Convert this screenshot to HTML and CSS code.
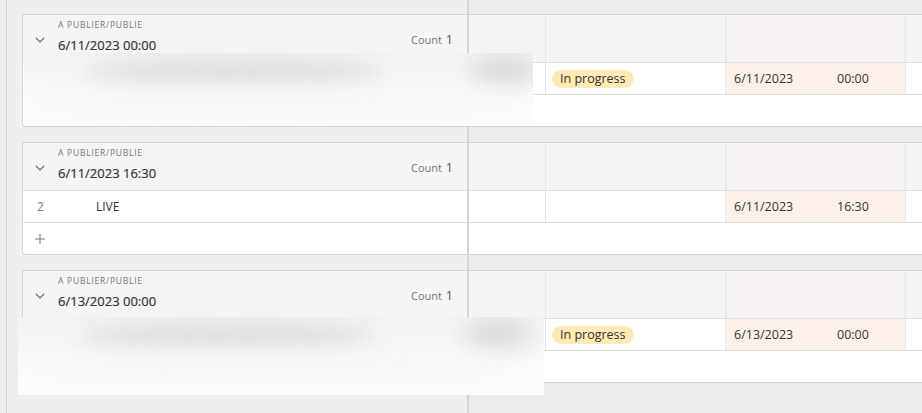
FILE: index.html
```html
<!DOCTYPE html>
<html>
<head>
<meta charset="utf-8">
<link rel="stylesheet" href="styles.css">
</head>
<body>
<div class="app">
  <div class="frozen">
    <section class="group">
      <div class="ghead">
        <svg class="chev" width="10" height="6" viewBox="0 0 10 6"><polyline points="1,1 5,5 9,1" fill="none" stroke="#666" stroke-width="1.1"/></svg>
        <div class="gtitle"><div class="glabel">A PUBLIER/PUBLIE</div><div class="gvalue">6/11/2023 00:00</div></div>
        <div class="count">Count <span class="num">1</span></div>
      </div>
      <div class="row"></div>
      <div class="row"></div>
    </section>
    <section class="group">
      <div class="ghead">
        <svg class="chev" width="10" height="6" viewBox="0 0 10 6"><polyline points="1,1 5,5 9,1" fill="none" stroke="#666" stroke-width="1.1"/></svg>
        <div class="gtitle"><div class="glabel">A PUBLIER/PUBLIE</div><div class="gvalue">6/11/2023 16:30</div></div>
        <div class="count">Count <span class="num">1</span></div>
      </div>
      <div class="row"><span class="rownum">2</span><span class="primary">LIVE</span></div>
      <div class="row add"><svg width="10" height="10" viewBox="0 0 10 10"><path d="M5 0v10M0 5h10" stroke="#777" stroke-width="1"/></svg></div>
    </section>
    <section class="group">
      <div class="ghead">
        <svg class="chev" width="10" height="6" viewBox="0 0 10 6"><polyline points="1,1 5,5 9,1" fill="none" stroke="#666" stroke-width="1.1"/></svg>
        <div class="gtitle"><div class="glabel">A PUBLIER/PUBLIE</div><div class="gvalue">6/13/2023 00:00</div></div>
        <div class="count">Count <span class="num">1</span></div>
      </div>
      <div class="row"></div>
      <div class="row"></div>
    </section>
  </div>
  <div class="divider"></div>
  <div class="scroll">
    <section class="group">
      <div class="ghead cols"><div class="c c1"></div><div class="c c2"></div><div class="c c3 pink"></div><div class="c c4"></div></div>
      <div class="row cols"><div class="c c1"></div><div class="c c2"><span class="pill">In progress</span></div><div class="c c3 pink"><span class="date">6/11/2023</span><span>00:00</span></div><div class="c c4"></div></div>
      <div class="row"></div>
    </section>
    <section class="group">
      <div class="ghead cols"><div class="c c1"></div><div class="c c2"></div><div class="c c3 pink"></div><div class="c c4"></div></div>
      <div class="row cols"><div class="c c1"></div><div class="c c2"></div><div class="c c3 pink"><span class="date">6/11/2023</span><span>16:30</span></div><div class="c c4"></div></div>
      <div class="row"></div>
    </section>
    <section class="group">
      <div class="ghead cols"><div class="c c1"></div><div class="c c2"></div><div class="c c3 pink"></div><div class="c c4"></div></div>
      <div class="row cols"><div class="c c1"></div><div class="c c2"><span class="pill">In progress</span></div><div class="c c3 pink"><span class="date">6/13/2023</span><span>00:00</span></div><div class="c c4"></div></div>
      <div class="row"></div>
    </section>
  </div>

  <div class="blur blur1">
    <div class="blob blob-a"></div>
    <div class="blob blob-b"></div>
    <div class="blob blob-c"></div>
  </div>
  <div class="blur blur2">
    <div class="blob blob-a"></div>
    <div class="blob blob-b"></div>
    <div class="blob blob-c"></div>
  </div>
</div>
</body>
</html>
```

FILE: styles.css
```css
* { box-sizing: border-box; }
html, body { margin: 0; padding: 0; }
body {
  font-family: "Open Sans", "Noto Sans", sans-serif;
  font-size: 12.5px;
  color: #333;
  background: #ececec;
  width: 922px;
  height: 413px;
  overflow: hidden;
}
.app {
  position: relative;
  display: flex;
  height: 413px;
}
.frozen {
  width: 461px;
  margin-left: 6px;
  border-left: 1px solid #d6d6d6;
  padding: 14px 0 0 15px;
  background: #efefef;
  display: flex;
  flex-direction: column;
  gap: 15px;
}
.divider {
  width: 2px;
  background: #d4d4d4;
}
.scroll {
  flex: 1;
  padding-top: 14px;
  display: flex;
  flex-direction: column;
  gap: 15px;
  min-width: 0;
  background: #ebebeb;
}
.group {
  border: 1px solid #d2d2d2;
  background: #fff;
}
.frozen .group {
  border-right: none;
  border-radius: 4px 0 0 4px;
}
.scroll .group {
  border-left: none;
  border-right: none;
}
.ghead {
  height: 47px;
  background: #f5f5f5;
  display: flex;
  align-items: flex-start;
}
.frozen .ghead { border-radius: 4px 0 0 0; padding: 0 14px 0 12px; }
.chev { margin-top: 22px; flex: none; }
.gtitle { margin-left: 13px; flex: 1; padding-top: 4px; }
.glabel {
  font-size: 8.5px;
  letter-spacing: 0.09em;
  color: #777;
  line-height: 12px;
}
.gvalue {
  font-size: 13px;
  font-weight: 500;
  color: #333;
  line-height: 18px;
  margin-top: 5px;
  -webkit-text-stroke: 0.2px #333;
}
.count {
  margin-top: 17px;
  font-size: 11px;
  color: #777;
  line-height: 16px;
}
.count .num { font-size: 12.5px; color: #555; margin-left: 1px; }
.row {
  height: 32px;
  border-top: 1px solid #e0e0e0;
  display: flex;
  align-items: center;
}
.rownum { width: 14px; margin-left: 14px; color: #777; font-size: 12px; }
.primary { margin-left: 45px; font-size: 12px; }
.add { padding-left: 12px; }
.cols { display: flex; align-items: stretch; }
.c { border-right: 1px solid #e8e8e8; display: flex; align-items: center; }
.c1 { width: 77px; }
.c2 { width: 180px; padding-left: 6px; }
.c3 { width: 180px; padding-left: 8px; }
.c4 { flex: 1; border-right: none; }
.ghead .pink { background: #f7f2f1; border-right-color: #ebe6e5; }
.row .pink { background: #fdf1ec; }
.ghead .c { border-right-color: #e6e6e6; }
.date { width: 103px; }
.pill {
  display: inline-block;
  height: 18px;
  line-height: 18px;
  padding: 0 8px;
  border-radius: 9px;
  background: #ffeab6;
  color: #333;
}
.blur {
  position: absolute;
  background: linear-gradient(#f3f3f3, #fbfbfb 60%, #fdfdfd);
  overflow: hidden;
}
.blur1 { left: 24px; top: 53px; width: 509px; height: 73px; }
.blur2 { left: 18px; top: 317px; width: 526px; height: 78px; }
.blob { position: absolute; border-radius: 50%; filter: blur(10px); }
.blob-a { left: 60px; top: 4px; width: 300px; height: 30px; background: #dedede; }
.blob-b { left: 445px; top: 2px; width: 70px; height: 30px; background: #dadada; }
.blob-c { left: 10px; top: 36px; width: 480px; height: 30px; background: #f7f7f7; }
```
